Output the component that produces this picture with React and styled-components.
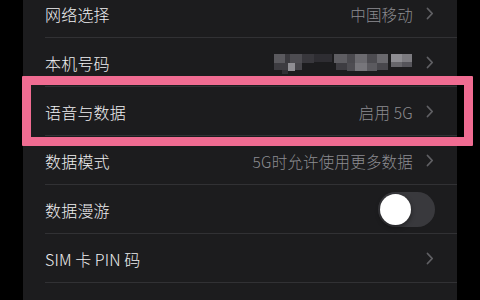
import React from "react";
import styled, { createGlobalStyle } from "styled-components";

const Global = createGlobalStyle`
  html, body {
    margin: 0;
    padding: 0;
    background: #000;
    overflow: hidden;
  }
  body {
    font-family: "Noto Sans CJK SC", "Inter", sans-serif;
    -webkit-font-smoothing: antialiased;
  }
`;

const Screen = styled.div`
  width: 480px;
  height: 300px;
  background: #000;
  overflow: hidden;
`;

const Panel = styled.div`
  position: relative;
  margin: -11px 0 0 23px;
  width: 434px;
  background: #1c1c1e;
`;

const Row = styled.div`
  height: 49px;
  margin-left: 22px;
  padding-right: 23px;
  display: flex;
  align-items: center;
  box-sizing: border-box;
  border-bottom: 1px solid #313134;
`;

const Label = styled.div`
  flex: 1;
  color: #efeff1;
  font-size: 16px;
  font-weight: 300;
  letter-spacing: 0.2px;
  padding-top: 2px;
`;

const Value = styled.div`
  color: #8c8c91;
  font-size: 15.5px;
  font-weight: 300;
  letter-spacing: 0.2px;
  margin-right: 13px;
  padding-top: 2px;
`;

const Chevron = styled.svg`
  width: 8px;
  height: 13px;
  flex: none;
`;

const Switch = styled.div`
  width: 57px;
  height: 35px;
  border-radius: 18px;
  background: #39393d;
  margin-right: -1px;
  margin-top: 1px;
  position: relative;
`;

const Knob = styled.div`
  position: absolute;
  left: 2px;
  top: 2px;
  width: 31px;
  height: 31px;
  border-radius: 50%;
  background: #fff;
  box-shadow: 0 2px 5px rgba(0, 0, 0, 0.45);
`;

const Highlight = styled.div`
  position: absolute;
  left: -1px;
  top: 87px;
  width: 451px;
  height: 70px;
  box-sizing: border-box;
  border: 9px solid #f06c92;
  border-radius: 1px;
  pointer-events: none;
`;

const Mosaic = styled.svg`
  width: 140px;
  height: 24px;
  margin-right: 12px;
  margin-top: 2px;
`;

function Arrow() {
  return (
    <Chevron viewBox="0 0 8 13">
      <path
        d="M1.5 1.5 L6.2 6.5 L1.5 11.5"
        fill="none"
        stroke="#606064"
        strokeWidth="1.8"
        strokeLinecap="round"
        strokeLinejoin="round"
      />
    </Chevron>
  );
}

// pixelated phone number, x from 277, y from 50
const blocks = [
  [0, 3, 11, 9, "#5a595e"],
  [11, 3, 5, 9, "#3a393e"],
  [16, 3, 12, 9, "#4d4c51"],
  [28, 3, 12, 9, "#38373c"],
  [40, 3, 18, 8, "#2e2d32"],
  [0, 12, 14, 7, "#3d3c41"],
  [14, 12, 7, 8, "#8f8e93"],
  [21, 12, 7, 7, "#46454a"],
  [8, 19, 6, 4, "#302f34"],
  [60, 3, 13, 9, "#5e5d62"],
  [73, 3, 8, 9, "#4a494e"],
  [81, 3, 12, 9, "#6b6a6f"],
  [62, 12, 11, 7, "#3e3d42"],
  [73, 12, 8, 8, "#4e4d52"],
  [81, 12, 12, 8, "#77767b"],
  [93, 3, 10, 9, "#4c4b50"],
  [103, 3, 11, 9, "#69686d"],
  [93, 12, 10, 8, "#5b5a5f"],
  [103, 12, 11, 7, "#48474c"],
  [117, 3, 11, 8, "#8e8d92"],
  [128, 3, 10, 8, "#7c7b80"],
  [117, 11, 11, 5, "#67666b"],
  [128, 11, 10, 5, "#55545a"],
];

function BlurredNumber() {
  return (
    <Mosaic viewBox="0 0 140 24">
      {blocks.map(([x, y, w, h, c], i) => (
        <rect key={i} x={x} y={y} width={w} height={h} fill={c} />
      ))}
    </Mosaic>
  );
}

const rows = [
  { label: "网络选择", value: "中国移动", arrow: true },
  { label: "本机号码", blurred: true, arrow: true },
  { label: "语音与数据", value: "启用 5G", arrow: true },
  { label: "数据模式", value: "5G时允许使用更多数据", arrow: true },
  { label: "数据漫游", toggle: true },
  { label: "SIM\u2009卡\u2009PIN\u2009码", arrow: true },
  { label: "", arrow: false },
];

export default function App() {
  return (
    <Screen>
      <Global />
      <Panel>
        {rows.map((r, i) => (
          <Row key={i}>
            <Label>{r.label}</Label>
            {r.value && <Value>{r.value}</Value>}
            {r.blurred && <BlurredNumber />}
            {r.arrow && <Arrow />}
            {r.toggle && (
              <Switch>
                <Knob />
              </Switch>
            )}
          </Row>
        ))}
        <Highlight />
      </Panel>
    </Screen>
  );
}
